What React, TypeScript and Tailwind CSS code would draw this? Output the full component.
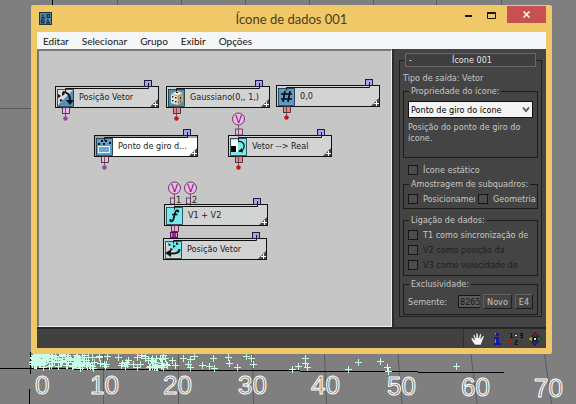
import type { ReactNode } from "react";

const menus = ["Editar", "Selecionar", "Grupo", "Exibir", "Opções"];

const rulerLabels = [
  { text: "0", x: 35, y: 394 },
  { text: "10", x: 90, y: 394 },
  { text: "20", x: 163, y: 394 },
  { text: "30", x: 238, y: 394 },
  { text: "40", x: 311, y: 394 },
  { text: "50", x: 387, y: 395 },
  { text: "60", x: 461, y: 396 },
  { text: "70", x: 534, y: 397 },
];

const farParticles = [
  [194, 356], [202, 365], [209, 366], [214, 368], [213, 358], [228, 357], [229, 363],
  [237, 367], [246, 356], [251, 358], [253, 364], [292, 369], [298, 366], [305, 363],
  [307, 367], [305, 358], [348, 369], [358, 362], [380, 361], [387, 367], [388, 371], [456, 366],
];

// small LCG so the particle cloud is the same on every load
function makeParticles() {
  let seed = 7;
  const rand = () => {
    seed = (seed * 1103515 + 12345) % 2147483648;
    return seed / 2147483648;
  };
  const list: number[][] = [];
  for (let i = 0; i < 110; i++) {
    list.push([32 + Math.round(rand() * rand() * 75), 354 + Math.round(rand() * 13)]);
  }
  for (let i = 0; i < 65; i++) {
    list.push([60 + Math.round(rand() * 105), 355 + Math.round(rand() * 13)]);
  }
  for (let i = 0; i < 10; i++) {
    list.push([160 + Math.round(rand() * 35), 355 + Math.round(rand() * 13)]);
  }
  return list;
}

const particles = [...makeParticles(), ...farParticles];

function Viewport() {
  return (
    <svg className="absolute inset-0 -z-10" width="576" height="404" viewBox="0 0 576 404" aria-hidden="true">
      <g stroke="#5c5c5c" fill="none">
        <path d="M117.500 0v8M181.500 0v8M245.500 0v8M309.500 0v8M373.500 0v8M436.500 0v8M501.500 0v8M0 108.500h34" />
        <path d="M103.500 354v50M178.500 354v50M252.500 354l1 50M324.500 354l2 50M398 354l4 50M471 354l6 50M544.500 354l7 50" />
      </g>
      <path d="M52.500 0v8M30.500 352v22M29.500 389v15" stroke="#000" />
      <path d="M0 368.500H74M74 369.500H159M159 370.500H300M300 371.500H418M418 372.500H504" stroke="#000" />
      <path
        d={particles.map(([x, y]) => `M${x - 3} ${y + 0.5}h7M${x + 0.5} ${y - 3}v7`).join("")}
        stroke="#c8fbe8"
        strokeWidth="1"
      />
      <g fill="#7f7f7f" stroke="#fff" strokeWidth="1" fontFamily="Liberation Sans, sans-serif" fontSize="26">
        {rulerLabels.map((l) => (
          <text key={l.text} x={l.x} y={l.y}>
            {l.text}
          </text>
        ))}
      </g>
    </svg>
  );
}

const VectorOutIcon = (
  <>
    <rect width="17" height="17" fill="#d9dcdb" />
    <path d="M17 0v17H0z" fill="#4f93bd" />
    <path d="M1 5l3 2-3 2zM5 3l3 2-3 2zM3 10l3 1-3 2z" fill="#111" />
    <path d="M6 3c6 0 7 4 7 9" fill="none" stroke="#111" strokeWidth="2" />
    <path d="M9 11h8l-4 5z" fill="#111" />
  </>
);

const DiceIcon = (
  <>
    <rect width="17" height="17" fill="#4f8db5" />
    <path d="M3 5l6-3 6 2v8l-5 4-7-2z" fill="#efe8d2" />
    <path d="M10 7l5-3v8l-5 4z" fill="#b9a57c" />
    <path d="M3 5l7 2v9M10 7l5-3" fill="none" stroke="#8b7b5c" strokeWidth=".6" />
    <path d="M4 7h1.500v1.500H4zM7 8h1.500v1.500H7zM4 11h1.500v1.500H4zM7 12h1.500v1.500H7zM12 8h1v2h-1zM12 12h1v1h-1zM8 3h2v1H8z" fill="#222" />
  </>
);

const HashIcon = (
  <>
    <rect width="17" height="17" fill="#5f9cc5" />
    <path d="M7 3L5 14M12 3l-2 11M3 6h11M3 11h11" stroke="#0b0b0b" strokeWidth="1.700" />
  </>
);

const PivotIcon = (
  <>
    <rect width="17" height="17" fill="#5f9fc8" />
    <path d="M2 5h2v2H2zM5 2h2v2H5zM9 2h2v2H9zM13 4h2v2h-2zM7 5h2v2H7z" fill="#111" />
    <rect x="2.500" y="8.500" width="11" height="6" fill="#6aa9d6" stroke="#e8f3fa" />
  </>
);

const ConvertIcon = (
  <>
    <rect width="17" height="17" fill="#7ce9ea" />
    <path d="M1 2h7v12H1z" fill="#fff" />
    <path d="M1 8h5v6H1z" fill="#000" />
    <path d="M8 3.500c8-1 8 9 1 10" fill="none" stroke="#111" strokeWidth="1.300" />
    <path d="M12 10l-4 3.500 5 1z" fill="#111" />
  </>
);

const FunctionIcon = (
  <>
    <rect width="17" height="17" fill="#74ecec" />
    <path
      d="M12.500 4.500C12 2.500 9.500 3 9 6L7.500 12c-.5 2.500-2.500 3-3.500 1.500M6 7.500h5.500"
      fill="none"
      stroke="#0a0a0a"
      strokeWidth="1.700"
    />
    <circle cx="12" cy="4.500" r="1.100" fill="#0a0a0a" />
    <circle cx="4.500" cy="13" r="1.100" fill="#0a0a0a" />
  </>
);

const VectorInIcon = (
  <>
    <rect width="17" height="17" fill="#d2d8d7" />
    <path d="M0 0h17v17z" fill="#74ecec" />
    <path d="M3 2l3 2-2 1zM8 4l3 1-3 2zM11 1l3 2-3 1zM5 7l3 1-2 2z" fill="#111" />
    <path d="M14.500 8c0 4-4 5-9.500 4.500" fill="none" stroke="#111" strokeWidth="2" />
    <path d="M6 8.500v7.500l-6-4z" fill="#111" />
  </>
);

type NodeProps = {
  label: string;
  place: string;
  icon: ReactNode;
  selected?: boolean;
  pin: string;
  dot?: string;
  inputs?: { x: number; index?: string }[];
};

const nodes: NodeProps[] = [
  { label: "Posição Vetor", place: "left-[16px] top-[35px]", icon: VectorOutIcon, pin: "#f0b4ee", dot: "#a23ba4" },
  { label: "Gaussiano(0,, 1,)", place: "left-[127px] top-[35px]", icon: DiceIcon, pin: "#ef8581", dot: "#d00c0c" },
  { label: "0,0", place: "left-[237px] top-[34px]", icon: HashIcon, pin: "#ef8581", dot: "#d00c0c" },
  {
    label: "Ponto de giro d...",
    place: "left-[55px] top-[84px]",
    icon: PivotIcon,
    selected: true,
    pin: "#f0b4ee",
    dot: "#a23ba4",
  },
  {
    label: "Vetor --> Real",
    place: "left-[189px] top-[84px]",
    icon: ConvertIcon,
    pin: "#ef8581",
    dot: "#d00c0c",
    inputs: [{ x: 10 }],
  },
  {
    label: "V1 + V2",
    place: "left-[125px] top-[153px]",
    icon: FunctionIcon,
    pin: "#f0a8e4",
    inputs: [
      { x: 10, index: "1" },
      { x: 26, index: "2" },
    ],
  },
  { label: "Posição Vetor", place: "left-[124px] top-[187px]", icon: VectorInIcon, pin: "" },
];

function OperatorNode({ label, place, icon, selected, pin, dot, inputs = [] }: NodeProps) {
  return (
    <div
      className={`absolute ${place} flex h-[22px] w-[104px] items-center border border-[#111] pl-[23px] ${
        selected ? "bg-white" : "bg-[#d2d3d3]"
      }`}
    >
      <span className="whitespace-nowrap text-[9px] leading-[12px] text-[#222]">{label}</span>
      <svg className="absolute -left-px -top-px overflow-visible" width="104" height="22" aria-hidden="true">
        {selected && <path d="M1 1h102v2H3v18H1z" fill="#a5a5a5" />}
        <g transform="translate(2 3)">{icon}</g>
        <rect x="2.500" y="3.500" width="16" height="17" fill="none" stroke="#20343f" strokeWidth=".8" />
        <rect x="89.500" y="-5.500" width="7" height="6" fill="#a3a3ee" stroke="#1c1c3c" />
        <path d="M93.500 -3v5.500H10.500v3" fill="none" stroke="#111" />
        <path d="M103 13v8h-8z" fill="#4a4a4a" />
        <path d="M98 18h2v-2h1v2h2v1h-2v2h-1v-2h-2z" fill="#fff" />
        {pin && <rect x="7.500" y="21.500" width="7" height="6" fill={pin} stroke="#3a1a28" strokeWidth=".8" />}
        {pin && <path d="M10.500 21v9" stroke="#333" strokeOpacity=".7" />}
        {dot && <circle cx="10.500" cy="32.500" r="2.200" fill={dot} />}
        {!pin && <rect x="7.500" y="-5.500" width="7" height="5" fill="#e58fd8" stroke="#5a1050" />}
        {!pin && <path d="M9 -5h4v4H9z" fill="#a0208e" />}
        {inputs.map((input) => (
          <g key={input.x}>
            <rect
              x={input.index ? input.x - 3.5 : input.x - 2.5}
              y="-6"
              width={input.index ? 4 : 7}
              height="6"
              fill="#f4b0e6"
              stroke="#3a1a38"
              strokeWidth=".7"
            />
            <path d={`M${input.x + 0.5} -10V2`} stroke="#444" strokeOpacity=".8" />
            <circle cx={input.x + 0.5} cy="-16" r="6" fill="#f4b5ee" stroke="#6b3c68" />
            <text
              x={input.x + 0.5}
              y="-12"
              textAnchor="middle"
              fontSize="10"
              fontFamily="Liberation Sans, sans-serif"
              fill="#4b1748"
            >
              V
            </text>
            {input.index && (
              <text x={input.x + 2} y="-1" fontSize="9" fill="#222">
                {input.index}
              </text>
            )}
          </g>
        ))}
      </svg>
    </div>
  );
}

function Group({ title, className, children }: { title: string; className: string; children: ReactNode }) {
  return (
    <fieldset className={`min-w-0 border border-[#1c1c1c] ${className}`}>
      <legend className="ml-px whitespace-nowrap px-[2px] leading-[12px]">{title}</legend>
      {children}
    </fieldset>
  );
}

function Check({ label, className = "", disabled }: { label: string; className?: string; disabled?: boolean }) {
  return (
    <label className={`flex items-center gap-[5px] ${disabled ? "text-[#1e1e1e]" : ""} ${className}`}>
      <input
        type="checkbox"
        disabled={disabled}
        className="size-[10px] shrink-0 appearance-none border border-[#181818] bg-[#4c4c4c]"
      />
      <span className="overflow-hidden whitespace-nowrap leading-[12px]">{label}</span>
    </label>
  );
}

function PropertiesPanel() {
  return (
    <aside className="w-[154px] shrink-0 border-l-2 border-[#2c2c2c] bg-[#444] pb-[10px] pl-[5px] pr-[4px] pt-[4px] text-[#c4c4c4]">
      <fieldset className="min-w-0 border border-[#1f1f1f] px-[3px] pb-px">
        <legend className="mx-[2px] w-[calc(100%-4px)]">
          <button className="flex h-[14px] w-full items-center border border-[#686868] bg-[#3f3f3f] px-[3px] text-[#e2e2e2]">
            <span>-</span>
            <span className="flex-1 text-center">Ícone 001</span>
          </button>
        </legend>
        <p className="mt-[5px] leading-[12px]">Tipo de saída: Vetor</p>
        <Group title="Propriedade do ícone:" className="mt-px px-[4px] pb-[13px] pt-[4px]">
          <div className="relative">
            <select
              aria-label="Propriedade do ícone"
              className="block h-[17px] w-full appearance-none border border-[#111] bg-[#f4f4f4] px-[2px] text-[9px] leading-[12px] text-black"
            >
              <option>Ponto de giro do ícone</option>
            </select>
            <svg className="pointer-events-none absolute right-[3px] top-[5px]" width="8" height="7" aria-hidden="true">
              <path d="M1 1.500l3 3.500 3-3.500" fill="none" stroke="#555" strokeWidth="1.800" />
            </svg>
          </div>
          <p className="mt-[4px] leading-[11px]">Posição do ponto de giro do ícone.</p>
        </Group>
        <Check label="Ícone estático" className="ml-[5px] mt-[6px]" />
        <Group title="Amostragem de subquadros:" className="mt-[2px] pb-[3px] pl-[4px] pt-[3px]">
          <div className="flex gap-[3px]">
            <Check label="Posicionamento" className="w-[67px]" />
            <Check label="Geometria" className="min-w-0 flex-1" />
          </div>
        </Group>
        <Group title="Ligação de dados:" className="mt-[5px] px-[4px] pb-[3px] pt-px">
          <Check label="T1 como sincronização de" className="h-[15px]" />
          <Check label="V2 como posição da" className="h-[15px]" disabled />
          <Check label="V3 como velocidade de" className="h-[15px]" disabled />
        </Group>
        <Group title="Exclusividade:" className="mt-[2px] px-[4px] pb-[5px] pt-[4px]">
          <div className="flex h-[15px] items-center gap-[3px]">
            <label htmlFor="seed" className="w-[47px]">
              Semente:
            </label>
            <input
              id="seed"
              defaultValue="8265"
              className="h-[13px] w-[22px] border border-r-0 border-[#161616] bg-[#5b5b5b] pl-px text-[#161616]"
            />
            <button className="h-[15px] w-[29px] border border-b-[#1f1f1f] border-l-[#626262] border-r-[#1f1f1f] border-t-[#626262]">
              Novo
            </button>
            <button className="h-[15px] w-[18px] border border-b-[#1f1f1f] border-l-[#626262] border-r-[#1f1f1f] border-t-[#626262]">
              E4
            </button>
          </div>
        </Group>
      </fieldset>
    </aside>
  );
}

function TitleBar() {
  return (
    <header className="grid h-[27px] grid-cols-[1fr_auto_1fr] items-center">
      <svg className="ml-[2px]" width="14" height="14" viewBox="0 0 14 14" aria-hidden="true">
        <rect x=".5" y=".5" width="12" height="12" fill="#4a86a8" stroke="#26323a" />
        <path d="M3 3h1v3M2 6h4M8 2.500h2.500v3H8zM2.500 8h2.500v3H2.500zM8 8h1v3M7 11h4" fill="none" stroke="#101a20" />
      </svg>
      <h1 className="font-['Lato','Open_Sans',sans-serif] text-[13px] leading-[20px] text-[#4a3d1c]">
        Ícone de dados 001
      </h1>
      <div className="flex items-start justify-end self-start pt-px">
        <button aria-label="Minimizar" className="flex h-[19px] w-[20px] items-center justify-center">
          <svg width="7" height="7" aria-hidden="true">
            <path d="M0 3h7v2H0z" fill="#1b1710" />
          </svg>
        </button>
        <button aria-label="Maximizar" className="flex h-[19px] w-[26px] items-center justify-center">
          <svg width="9" height="7" aria-hidden="true">
            <path d="M.5 1.500v5h8v-5" fill="none" stroke="#1b1710" />
            <path d="M0 0h9v2H0z" fill="#1b1710" />
          </svg>
        </button>
        <button aria-label="Fechar" className="ml-[3px] flex h-[17px] w-[39px] items-center justify-center bg-[#c75050]">
          <svg width="7" height="7" aria-hidden="true">
            <path d="M.5 .5l6 6M6.500 .5l-6 6" stroke="#fff" strokeWidth="1.500" />
          </svg>
        </button>
      </div>
    </header>
  );
}

function StatusBar() {
  return (
    <footer className="flex h-[21px] items-center border-t-2 border-[#262626] bg-[#444] pr-[4px]">
      <div className="h-full flex-1 border-r border-[#2f2f2f] bg-[#414141]" />
      <div className="flex items-center gap-[5px] pl-[7px]">
        <button aria-label="Mover">
          <svg className="block" width="14" height="14" viewBox="0 0 14 14" aria-hidden="true">
            <path
              d="M4 13L1 9 0 6l1.500-.5L3.500 8 2 3l1.500-.5L5 6 5 1h1.700L7.500 6 9 1.500l1.500.5L9.800 6.500 12 3.500l1.300.8L11.500 9 10 13z"
              fill="#f5f5f5"
              stroke="#222"
              strokeWidth=".5"
            />
          </svg>
        </button>
        <button aria-label="Informações">
          <svg className="block" width="14" height="14" viewBox="0 0 14 14" aria-hidden="true">
            <path d="M5 1h4v3H5zM4 5h5v6h2v2H4v-2h1V7H4z" fill="#1616a8" />
            <path d="M5 1h1v2H5zM5 7h1v4H5z" fill="#6d76e0" />
          </svg>
        </button>
        <button aria-label="Ordem">
          <svg className="block" width="14" height="14" viewBox="0 0 14 14" aria-hidden="true">
            <path d="M1 1.500h1.500v4M1 5.500h3M11 1.500h2.500v4H11M11 3.500h2M6 8.500h2v2H6v2h3" fill="none" stroke="#111" />
            <path d="M1.500 8v4H5M12.500 8v4H10" fill="none" stroke="#b01616" />
            <circle cx="7" cy="3.500" r="1.600" fill="#ddd" stroke="#111" />
          </svg>
        </button>
        <button aria-label="Navegar">
          <svg className="block" width="14" height="14" viewBox="0 0 14 14" aria-hidden="true">
            <path d="M7 0l3 4H4z" fill="#a01818" stroke="#111" strokeWidth=".6" />
            <path d="M7 14l3-4H4z" fill="#2323b0" stroke="#111" strokeWidth=".6" />
            <path d="M0 7l4-3v6z" fill="#c8b718" stroke="#111" strokeWidth=".6" />
            <path d="M14 7l-4-3v6z" fill="#12862a" stroke="#111" strokeWidth=".6" />
            <path d="M5 5h4v4H5z" fill="#111" />
            <path d="M6 6h2v2H6z" fill="#ddd" />
          </svg>
        </button>
      </div>
    </footer>
  );
}

export default function App() {
  return (
    <div className="relative isolate min-h-screen overflow-hidden bg-[#7f7f7f] pl-[31px] pr-[24px] pt-[5px] font-['DejaVu_Sans_Condensed','DejaVu_Sans',sans-serif] text-[9px] leading-[12px]">
      <Viewport />
      <main className="rounded-[2px] bg-[#f0c868] px-[6px] pb-[6px]">
        <TitleBar />
        <nav className="flex h-[17px] items-center gap-[13px] bg-[#f5f6f7] px-[6px] font-['Lato','Open_Sans',sans-serif] text-[10px] text-[#111]">
          {menus.map((m) => (
            <button key={m}>{m}</button>
          ))}
        </nav>
        <div className="flex">
          <section className="relative min-w-0 flex-1 border-b border-l-2 border-r border-t-2 border-b-[#efefef] border-l-[#777] border-r-[#efefef] border-t-[#777] bg-[#c6c6c6]">
            {nodes.map((n) => (
              <OperatorNode key={n.place} {...n} />
            ))}
          </section>
          <PropertiesPanel />
        </div>
        <StatusBar />
      </main>
    </div>
  );
}
